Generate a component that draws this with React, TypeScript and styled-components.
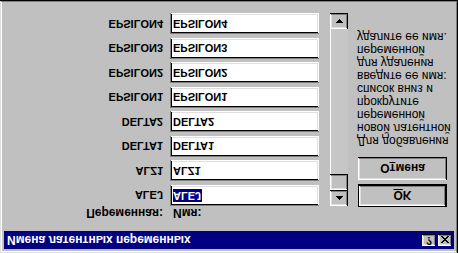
import React from 'react';
import styled, { createGlobalStyle } from 'styled-components';

const GlobalStyle = createGlobalStyle`
  html, body {
    margin: 0;
    padding: 0;
    background: #c0c0c0;
  }
  body {
    width: 458px;
    height: 253px;
    overflow: hidden;
    font-family: "Liberation Sans", Arial, sans-serif;
  }
`;

const raised = `
  box-shadow: inset -1px -1px #000, inset 1px 1px #fff,
    inset -2px -2px #808080, inset 2px 2px #dfdfdf;
`;

const sunken = `
  box-shadow: inset 1px 1px #808080, inset -1px -1px #fff,
    inset 2px 2px #000, inset -2px -2px #dfdfdf;
`;

// the screenshot is mirrored top-to-bottom, so the whole dialog is flipped
const Dialog = styled.div`
  box-sizing: border-box;
  width: 458px;
  height: 253px;
  padding: 4px 4px 0 4px;
  background: #c0c0c0;
  box-shadow: inset -1px -1px #000, inset 1px 1px #dfdfdf,
    inset -2px -2px #808080, inset 2px 2px #fff;
  transform: scaleY(-1);
  display: flex;
  flex-direction: column;
`;

const TitleBar = styled.div`
  height: 18px;
  display: flex;
  align-items: center;
  padding: 0 2px 0 2px;
  background: #000080;
  color: #fff;
  font-weight: bold;
  font-size: 12px;
`;

const TitleText = styled.div`
  flex: 1;
  padding-left: 1px;
  white-space: nowrap;
`;

const CaptionButton = styled.div<{ gap?: number }>`
  width: 14px;
  height: 12px;
  margin-left: ${(p) => p.gap ?? 0}px;
  background: #c0c0c0;
  ${raised}
  display: flex;
  align-items: center;
  justify-content: center;
  color: #000;
  font-size: 10px;
  font-weight: bold;
  line-height: 1;
`;

const Body = styled.div`
  display: flex;
  padding-top: 10px;
`;

const LeftPane = styled.div`
  display: flex;
  flex-direction: column;
`;

const Grid = styled.div`
  display: grid;
  grid-template-columns: 159px 149px;
  column-gap: 7px;
  align-items: center;
`;

const HeaderRow = styled(Grid)`
  height: 15px;
  font-size: 12px;
  font-weight: bold;
  color: #000;
`;

const HeaderLabel = styled.div<{ right?: boolean }>`
  text-align: ${(p) => (p.right ? 'right' : 'left')};
  padding-left: ${(p) => (p.right ? 0 : 3)}px;
  white-space: nowrap;
`;

const List = styled.div`
  height: 193px;
  display: flex;
  flex-direction: column;
  justify-content: space-between;
`;

const Row = styled(Grid)`
  height: 21px;
`;

const Label = styled.div`
  text-align: right;
  font-size: 11px;
  font-weight: bold;
  color: #000;
`;

const Field = styled.div`
  box-sizing: border-box;
  height: 21px;
  padding: 0 3px;
  background: #fff;
  ${sunken}
  display: flex;
  align-items: center;
  font-size: 11px;
  font-weight: bold;
  color: #000;
`;

const Selected = styled.span`
  background: #000080;
  color: #fff;
  padding: 0 1px 0 0;
  line-height: 13px;
`;

const ScrollBar = styled.div`
  margin: 15px 0 0 11px;
  width: 18px;
  height: 193px;
  display: flex;
  flex-direction: column;
  background: #c6c6c6;
  box-shadow: inset 1px 0 #fff;
`;

const ScrollButton = styled.div`
  height: 16px;
  background: #c0c0c0;
  ${raised}
  display: flex;
  align-items: center;
  justify-content: center;
`;

const Track = styled.div`
  flex: 1;
`;

const RightPane = styled.div`
  margin-left: 10px;
  width: 89px;
  padding-top: 14px;
  display: flex;
  flex-direction: column;
`;

const Button = styled.div<{ primary?: boolean }>`
  box-sizing: border-box;
  height: 23px;
  margin-bottom: 4px;
  background: #c0c0c0;
  border: ${(p) => (p.primary ? '1px solid #000' : 'none')};
  ${raised}
  display: flex;
  align-items: center;
  justify-content: center;
  font-size: 12px;
  font-weight: bold;
  color: #000;
`;

const Hotkey = styled.span`
  text-decoration: underline;
`;

const HelpText = styled.div`
  margin: 6px 0 0 -1px;
  font-size: 12px;
  line-height: 13px;
  color: #000;
  white-space: nowrap;
`;

const Arrow = ({ down }: { down?: boolean }) => (
  <svg width="7" height="4" viewBox="0 0 7 4" style={{ transform: down ? 'scaleY(-1)' : undefined }}>
    <path d="M3 0h1v1H3zM2 1h3v1H2zM1 2h5v1H1zM0 3h7v1H0z" fill="#000" />
  </svg>
);

const CloseGlyph = () => (
  <svg width="8" height="7" viewBox="0 0 8 7">
    <path d="M0 0h2v1H0zM6 0h2v1H6zM1 1h2v1H1zM5 1h2v1H5zM2 2h4v1H2zM3 3h2v1H3zM2 4h4v1H2zM1 5h2v1H1zM5 5h2v1H5zM0 6h2v1H0zM6 6h2v1H6z" fill="#000" />
  </svg>
);

const rows = [
  'ALEJ',
  'ALZ1',
  'DELTA1',
  'DELTA2',
  'EPSILON1',
  'EPSILON2',
  'EPSILON3',
  'EPSILON4',
];

const help = [
  'Для добавления',
  'новой латентной',
  'переменной',
  'прокрутите',
  'список вниз и',
  'введите ее имя:',
  'для удаления',
  'переменной',
  'удалите ее имя.',
];

export default function App() {
  return (
    <>
      <GlobalStyle />
      <Dialog>
        <TitleBar>
          <TitleText>Имена латентных переменных</TitleText>
          <CaptionButton>?</CaptionButton>
          <CaptionButton gap={2}>
            <CloseGlyph />
          </CaptionButton>
        </TitleBar>
        <Body>
          <LeftPane>
            <HeaderRow>
              <HeaderLabel right>Переменная:</HeaderLabel>
              <HeaderLabel>Имя:</HeaderLabel>
            </HeaderRow>
            <List>
              {rows.map((name, i) => (
                <Row key={name}>
                  <Label>{name}</Label>
                  <Field>{i === 0 ? <Selected>{name}</Selected> : name}</Field>
                </Row>
              ))}
            </List>
          </LeftPane>
          <ScrollBar>
            <ScrollButton>
              <Arrow />
            </ScrollButton>
            <ScrollButton />
            <Track />
            <ScrollButton>
              <Arrow down />
            </ScrollButton>
          </ScrollBar>
          <RightPane>
            <Button primary>
              <Hotkey>O</Hotkey>K
            </Button>
            <Button>
              О<Hotkey>т</Hotkey>мена
            </Button>
            <HelpText>
              {help.map((line, i) => (
                <div key={i}>{line}</div>
              ))}
            </HelpText>
          </RightPane>
        </Body>
      </Dialog>
    </>
  );
}
